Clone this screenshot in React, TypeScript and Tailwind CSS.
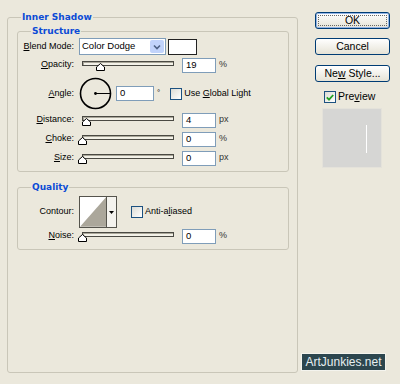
import React from 'react';

function U({ children }: { children: React.ReactNode }) {
  return <span className="underline underline-offset-[1px]">{children}</span>;
}

function Slider({ pos }: { pos: number }) {
  return (
    <div className="relative ml-[8px] h-[16px] w-[92px]">
      <div className="mt-[4px] h-[5px] border border-[#4a4943] bg-[#f3f1e8] shadow-[inset_1px_1px_0_#a9a699]" />
      <svg className="absolute top-[6px]" style={{ left: pos - 4 }} width="9" height="8" viewBox="0 0 9 8">
        <polygon points="0.5,7.5 0.5,4 4.5,0.5 8.5,4 8.5,7.5" fill="#fff" stroke="#000" />
      </svg>
    </div>
  );
}

function Field({ value, w = 34 }: { value: string; w?: number }) {
  return (
    <div
      className={`flex h-[15px] items-center border border-[#7f9db9] bg-white pl-[3px] text-[9.5px] ${w === 34 ? 'w-[34px]' : 'w-[38px]'}`}
    >
      {value}
    </div>
  );
}

function Check({ checked = false }: { checked?: boolean }) {
  return (
    <div className="flex h-[12px] w-[12px] items-center justify-center border border-[#1c5180] bg-gradient-to-br from-[#dcdcd5] to-white">
      {checked && (
        <svg width="8" height="7" viewBox="0 0 8 7">
          <path d="M0.8 3.4 L3 5.6 L7.2 1" fill="none" stroke="#21a121" strokeWidth="1.8" />
        </svg>
      )}
    </div>
  );
}

function SliderRow({ label, value, unit, pos }: { label: React.ReactNode; value: string; unit: string; pos: number }) {
  return (
    <div className="flex h-[16px] items-center">
      <div className="w-[56px] text-right">{label}</div>
      <Slider pos={pos} />
      <div className="ml-[8px]">
        <Field value={value} />
      </div>
      <span className="ml-[3px] text-[#333]">{unit}</span>
    </div>
  );
}

function XpButton({ children, def = false }: { children: React.ReactNode; def?: boolean }) {
  return (
    <div
      className={`flex h-[17px] w-[75px] items-center justify-center rounded-[3px] border border-[#003c74] bg-gradient-to-b from-white to-[#e6e3d6] p-[2px] text-[10.5px] ${
        def ? 'shadow-[inset_0_0_0_1px_#93b4e6]' : ''
      }`}
    >
      {children}
    </div>
  );
}

export default function App() {
  return (
    <div className="relative flex h-[384px] w-[400px] bg-[#ebe8dc] font-['Liberation_Sans',Arial,sans-serif] text-[9px] text-black">
      {/* Inner Shadow group */}
      <fieldset className="ml-[7px] mt-[11px] h-[362px] w-[291px] rounded-[3px] border border-[#c9c6b8]">
        <legend className="ml-[13px] px-[1px] font-['DejaVu_Sans',sans-serif] text-[9px] font-bold leading-[12px] text-[#0b4bd6]">
          Inner Shadow
        </legend>

        {/* Structure */}
        <fieldset className="ml-[9px] mt-[2px] w-[272px] rounded-[3px] border border-[#c9c6b8] pb-[5px]">
          <legend className="ml-[13px] px-[1px] font-['DejaVu_Sans',sans-serif] text-[9px] font-bold leading-[12px] text-[#0b4bd6]">
            Structure
          </legend>

          <div className="mt-[1px] flex h-[17px] items-center">
            <div className="w-[56px] text-right">
              <U>B</U>lend Mode:
            </div>
            <div className="ml-[5px] flex h-[17px] w-[87px] items-center border border-[#7f9db9] bg-white">
              <span className="flex-1 pl-[2px] text-[9.5px]">Color Dodge</span>
              <div className="mr-[1px] flex h-[13px] w-[14px] items-center justify-center rounded-[2px] bg-[#c1d3fb]">
                <svg width="8" height="6" viewBox="0 0 8 6">
                  <path d="M1 1.5 L4 4.5 L7 1.5" fill="none" stroke="#4d6185" strokeWidth="1.6" />
                </svg>
              </div>
            </div>
            <div className="ml-[2px] h-[16px] w-[29px] border border-[#222] bg-white" />
          </div>

          <div className="mt-[2px]">
            <SliderRow label={<><U>O</U>pacity:</>} value="19" unit="%" pos={18} />
          </div>

          <div className="mt-[4px] flex h-[33px] items-center">
            <div className="w-[56px] text-right">
              <U>A</U>ngle:
            </div>
            <svg className="ml-[5px]" width="33" height="33" viewBox="0 0 33 33">
              <circle cx="16.5" cy="16.5" r="15" fill="none" stroke="#000" strokeWidth="1.6" />
              <line x1="16.5" y1="16.5" x2="31" y2="16.5" stroke="#000" strokeWidth="1" />
              <circle cx="16.5" cy="16.5" r="1.4" fill="#000" />
            </svg>
            <div className="ml-[4px]">
              <Field value="0" w={38} />
            </div>
            <span className="ml-[3px] self-start pt-[10px] text-[8px]">°</span>
            <div className="ml-[10px]">
              <Check />
            </div>
            <span className="ml-[2px]">
              Use <U>G</U>lobal Light
            </span>
          </div>

          <div className="mt-[2px]">
            <SliderRow label={<><U>D</U>istance:</>} value="4" unit="px" pos={3.5} />
          </div>
          <div className="mt-[3px]">
            <SliderRow label={<><U>C</U>hoke:</>} value="0" unit="%" pos={-0.5} />
          </div>
          <div className="mt-[3px]">
            <SliderRow label={<><U>S</U>ize:</>} value="0" unit="px" pos={-0.5} />
          </div>
        </fieldset>

        {/* Quality */}
        <fieldset className="ml-[9px] mt-[9px] w-[272px] rounded-[3px] border border-[#c9c6b8] pb-[5px]">
          <legend className="ml-[13px] px-[1px] font-['DejaVu_Sans',sans-serif] text-[9px] font-bold leading-[12px] text-[#0b4bd6]">
            Quality
          </legend>

          <div className="mt-[3px] flex h-[32px] items-center">
            <div className="w-[56px] text-right">Contour:</div>
            <div className="ml-[5px] flex h-[32px]">
              <svg width="28" height="32" viewBox="0 0 28 32" className="border border-[#55544d] bg-white">
                <polygon points="0,32 28,0 28,32" fill="#aba79b" />
              </svg>
              <div className="flex h-[32px] w-[10px] items-center justify-center border border-l-0 border-[#55544d] bg-[#f4f3ee]">
                <svg width="5" height="3" viewBox="0 0 5 3">
                  <polygon points="0,0 5,0 2.5,3" fill="#000" />
                </svg>
              </div>
            </div>
            <div className="ml-[14px]">
              <Check />
            </div>
            <span className="ml-[2px]">
              Anti-a<U>l</U>iased
            </span>
          </div>

          <SliderRow label={<><U>N</U>oise:</>} value="0" unit="%" pos={-0.5} />
        </fieldset>
      </fieldset>

      {/* Buttons */}
      <div className="ml-[17px] mt-[12px] flex w-[75px] flex-col">
        <XpButton def>
          <span className="flex h-full w-full items-center justify-center border border-dotted border-[#666]">OK</span>
        </XpButton>
        <div className="mt-[9px]">
          <XpButton>Cancel</XpButton>
        </div>
        <div className="mt-[10px]">
          <XpButton>
            <span>
              Ne<U>w</U> Style...
            </span>
          </XpButton>
        </div>
        <div className="ml-[9px] mt-[9px] flex h-[12px] items-center">
          <Check checked />
          <span className="ml-[2px] text-[10.5px]">
            Pre<U>v</U>iew
          </span>
        </div>
        <div className="ml-[7px] mt-[5px] flex h-[60px] w-[60px] border border-[#e4e2da] bg-[#d6d6d4] pl-[43px] pt-[16px]">
          <div className="h-[28px] w-[1px] bg-white" />
        </div>
      </div>

      {/* watermark */}
      <div className="absolute left-[301px] top-[353px] flex h-[18px] w-[85px] items-center justify-center border border-[#f4f4ee] bg-[#2c464e] text-[12px] text-[#e6eef0]">
        ArtJunkies.net
      </div>
    </div>
  );
}
